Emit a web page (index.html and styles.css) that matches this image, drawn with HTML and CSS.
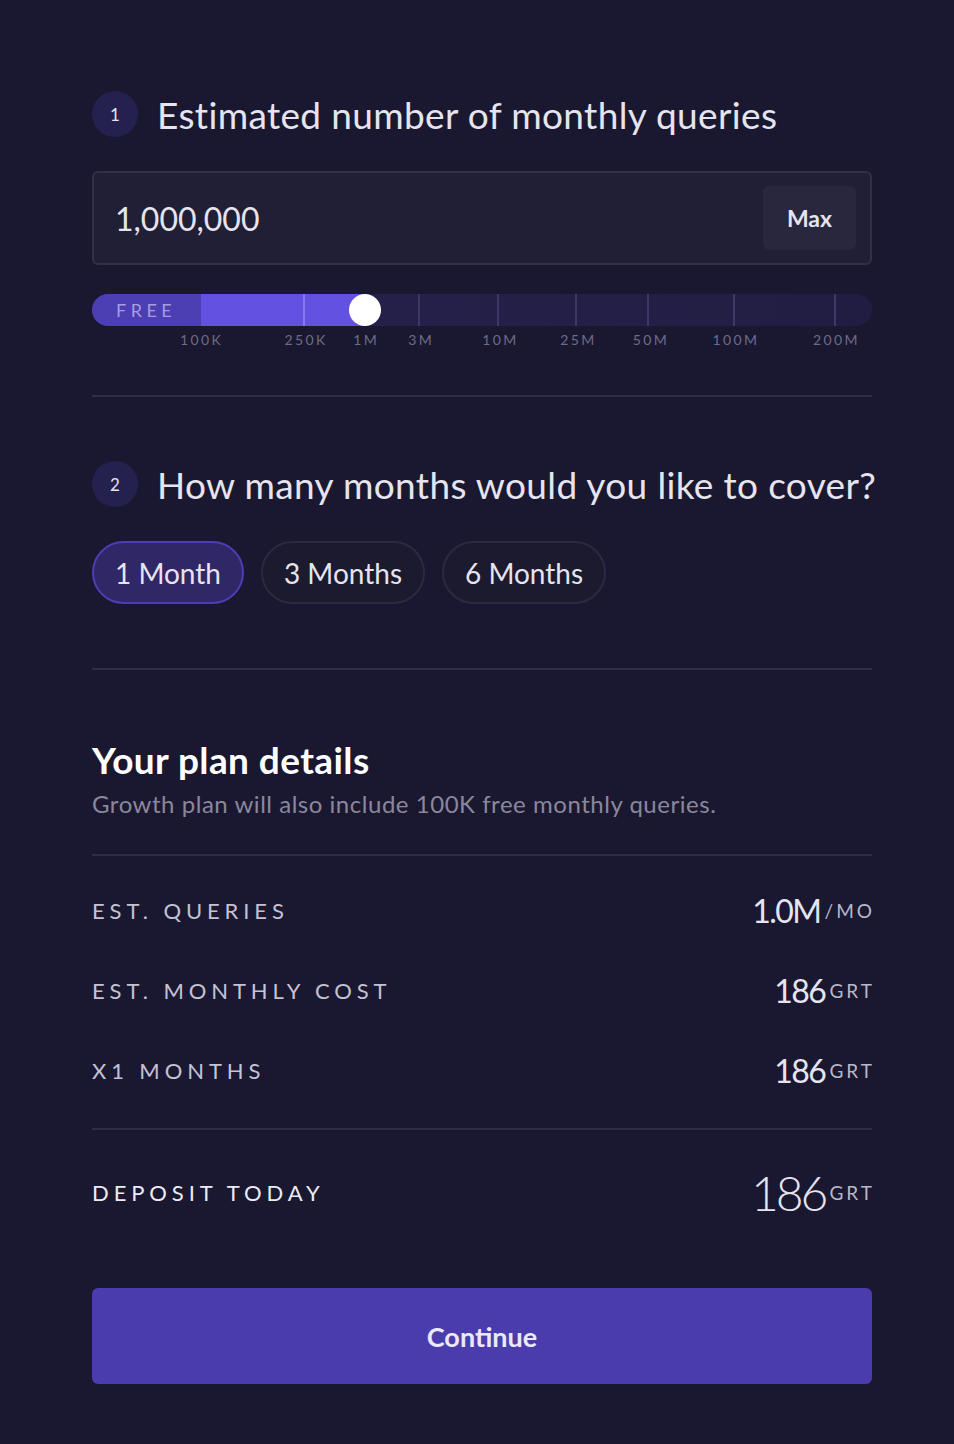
FILE: index.html
```html
<!DOCTYPE html>
<html>
<head>
<meta charset="utf-8">
<link rel="stylesheet" href="styles.css">
</head>
<body>
<main class="page">
  <section class="step">
    <div class="step-head">
      <span class="badge">1</span>
      <h2 class="step-title">Estimated number of monthly queries</h2>
    </div>
    <div class="input-box">
      <span class="input-value">1,000,000</span>
      <button class="max-btn">Max</button>
    </div>
    <div class="slider">
      <div class="track">
        <div class="free">FREE</div>
        <div class="fill"></div>
        <span class="tick tick-on" style="left:27.2%"></span>
        <span class="tick" style="left:41.9%"></span>
        <span class="tick" style="left:52.05%"></span>
        <span class="tick" style="left:62.1%"></span>
        <span class="tick" style="left:71.3%"></span>
        <span class="tick" style="left:82.3%"></span>
        <span class="tick" style="left:95.3%"></span>
        <span class="thumb"></span>
      </div>
      <div class="scale">
        <span class="mark" style="left:13.9%">100K</span>
        <span class="mark" style="left:27.3%">250K</span>
        <span class="mark" style="left:35%">1M</span>
        <span class="mark" style="left:42.05%">3M</span>
        <span class="mark" style="left:52.2%">10M</span>
        <span class="mark" style="left:62.2%">25M</span>
        <span class="mark" style="left:71.5%">50M</span>
        <span class="mark" style="left:82.4%">100M</span>
        <span class="mark" style="left:95.3%">200M</span>
      </div>
    </div>
  </section>

  <hr class="divider div-1">

  <section class="step">
    <div class="step-head">
      <span class="badge">2</span>
      <h2 class="step-title">How many months would you like to cover?</h2>
    </div>
    <div class="pills">
      <button class="pill pill-active">1 Month</button>
      <button class="pill">3 Months</button>
      <button class="pill">6 Months</button>
    </div>
  </section>

  <hr class="divider div-2">

  <section class="details">
    <h3 class="details-title">Your plan details</h3>
    <p class="details-sub">Growth plan will also include 100K free monthly queries.</p>
    <hr class="divider div-3">
    <div class="rows">
      <div class="row">
        <span class="row-label">EST. QUERIES</span>
        <span class="row-value"><span class="num">1.0M</span><span class="unit">/MO</span></span>
      </div>
      <div class="row">
        <span class="row-label">EST. MONTHLY COST</span>
        <span class="row-value"><span class="num">186</span><span class="unit">GRT</span></span>
      </div>
      <div class="row">
        <span class="row-label">X1 MONTHS</span>
        <span class="row-value"><span class="num">186</span><span class="unit">GRT</span></span>
      </div>
    </div>
    <hr class="divider div-4">
    <div class="row total">
      <span class="row-label total-label">DEPOSIT TODAY</span>
      <span class="row-value"><span class="num big">186</span><span class="unit">GRT</span></span>
    </div>
  </section>

  <button class="continue">Continue</button>
</main>
</body>
</html>
```

FILE: styles.css
```css
* { box-sizing: border-box; }
html, body { margin: 0; padding: 0; }
body {
  background: #1a1830;
  font-family: "Lato", "Liberation Sans", sans-serif;
  color: #e6e4ef;
  width: 954px;
  height: 1444px;
  overflow: hidden;
}
.page {
  width: 780px;
  margin-left: 92px;
  padding-top: 91px;
}
.step-head {
  display: flex;
  align-items: center;
  gap: 19px;
  height: 46px;
}
.badge {
  width: 46px;
  height: 46px;
  border-radius: 50%;
  background: #25214f;
  color: #e6e4ef;
  font-size: 17px;
  display: flex;
  align-items: center;
  justify-content: center;
  flex: none;
}
.step-title {
  margin: 0;
  font-weight: 400;
  font-size: 37px;
  color: #e6e4ef;
  white-space: nowrap;
  letter-spacing: 0.35px;
}
.input-box {
  margin-top: 34px;
  height: 94px;
  border: 2px solid #322f47;
  border-radius: 6px;
  background: #211f35;
  display: flex;
  align-items: center;
  justify-content: space-between;
  padding: 0 14px 0 21px;
}
.input-value {
  font-size: 32px;
  color: #e6e4ef;
}
.max-btn {
  width: 93px;
  height: 64px;
  border: none;
  border-radius: 6px;
  background: #29273d;
  color: #e6e4ef;
  font-family: inherit;
  font-weight: 700;
  font-size: 23px;
}
.slider {
  margin-top: 29px;
  height: 101px;
}
.track {
  position: relative;
  height: 32px;
  border-radius: 16px;
  background: linear-gradient(90deg, #27224e 0%, #211d42 100%);
  overflow: hidden;
}
.free {
  position: absolute;
  left: 0;
  top: 0;
  width: 109px;
  height: 32px;
  background: #4c3eb3;
  color: #a59de0;
  font-size: 18px;
  letter-spacing: 4.5px;
  line-height: 32px;
  padding-left: 24px;
}
.fill {
  position: absolute;
  left: 109px;
  top: 0;
  width: 164px;
  height: 32px;
  background: #6351e1;
}
.tick {
  position: absolute;
  top: 0;
  width: 2px;
  height: 32px;
  background: #3d3868;
  margin-left: -1px;
}
.tick-on { background: #8676f0; }
.thumb {
  position: absolute;
  left: 257px;
  top: 0;
  width: 32px;
  height: 32px;
  border-radius: 50%;
  background: #ffffff;
}
.scale {
  position: relative;
  height: 30px;
}
.mark {
  position: absolute;
  top: 5px;
  transform: translateX(-50%);
  font-size: 14px;
  letter-spacing: 2.4px;
  padding-left: 2.4px;
  color: #6e6b86;
  white-space: nowrap;
}
.divider {
  border: none;
  height: 2px;
  background: #2f2d45;
  margin: 0;
}
.div-1 + .step .step-head { margin-top: 64px; }
.pills {
  margin-top: 34px;
  display: flex;
  gap: 17px;
}
.pill {
  height: 63px;
  border-radius: 32px;
  border: 2px solid #2c2a40;
  background: #1b1a2e;
  color: #e6e4ef;
  font-family: inherit;
  font-size: 28px;
  padding: 0 21px;
}
.pill-active {
  background: #2f2766;
  border-color: #4b3db4;
}
.div-2 { margin-top: 64px; }
.details-title {
  margin: 68px 0 0;
  font-size: 37px;
  font-weight: 700;
  line-height: 44px;
  color: #ffffff;
  letter-spacing: 0.4px;
}
.details-sub {
  margin: 7px 0 0;
  font-size: 24px;
  line-height: 30px;
  color: #8a879c;
  letter-spacing: 0.53px;
}
.div-3 { margin-top: 35px; }
.rows { padding: 14px 0 18px; }
.row {
  display: flex;
  align-items: center;
  justify-content: space-between;
  height: 80px;
}
.row-label {
  font-size: 22px;
  letter-spacing: 4.9px;
  color: #c4c2d3;
}
.row-value {
  display: flex;
  align-items: center;
  gap: 4px;
}
.num {
  font-size: 32px;
  color: #e6e4ef;
  letter-spacing: -1.5px;
}
.unit {
  font-size: 19px;
  letter-spacing: 3px;
  margin-right: -3px;
  color: #b9b7c8;
}
.total { height: 96px; margin-top: 14px; }
.total-label { color: #ecebf3; }
.num.big { font-size: 48px; letter-spacing: -3px; font-weight: 300; }
.continue {
  display: block;
  margin-top: 48px;
  width: 780px;
  height: 96px;
  border: none;
  border-radius: 6px;
  background: #4a3cac;
  color: #ebe9f6;
  font-family: inherit;
  font-weight: 700;
  font-size: 27px;
}
```
